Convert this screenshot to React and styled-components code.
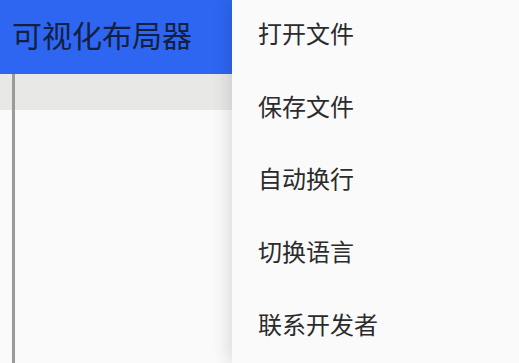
import React from "react";
import styled, { createGlobalStyle } from "styled-components";

const Global = createGlobalStyle`
  html, body { margin: 0; padding: 0; }
  body {
    width: 519px;
    height: 363px;
    overflow: hidden;
    background: #fafafa;
    font-family: "Noto Sans CJK SC", "Noto Sans", sans-serif;
  }
`;

const Page = styled.div`
  position: relative;
  width: 519px;
  height: 363px;
  display: flex;
  flex-direction: column;
  background: #fafafa;
  overflow: hidden;
`;

const Header = styled.header`
  height: 74px;
  background: #2e66f2;
  display: flex;
  align-items: center;
  padding-left: 12px;
  flex-shrink: 0;
`;

const Title = styled.h1`
  margin: 0;
  font-size: 30px;
  font-weight: 400;
  color: #14203f;
  line-height: 1;
  transform: translateY(-3px);
`;

const Body = styled.div`
  flex: 1;
  display: flex;
  flex-direction: column;
  position: relative;
`;

const Strip = styled.div`
  height: 36px;
  background: #e8e8e7;
`;

const Canvas = styled.div`
  flex: 1;
  background: #fafafa;
`;

const Divider = styled.div`
  position: absolute;
  left: 12px;
  top: 0;
  bottom: 0;
  width: 3px;
  background: #9a9a9a;
`;

const Menu = styled.nav`
  position: absolute;
  top: 0;
  left: 232px;
  right: 0;
  bottom: 0;
  background: #fafafa;
  box-shadow: -4px 0 16px rgba(0, 0, 0, 0.12);
  display: flex;
  flex-direction: column;
`;

const Item = styled.div`
  height: 73.5px;
  display: flex;
  align-items: center;
  padding-left: 26px;
  font-size: 24px;
  color: #2b2b2b;
  line-height: 1;
  transform: translateY(-3px);
`;

const items = ["打开文件", "保存文件", "自动换行", "切换语言", "联系开发者"];

export default function App() {
  return (
    <>
      <Global />
      <Page>
        <Header>
          <Title>可视化布局器</Title>
        </Header>
        <Body>
          <Strip />
          <Canvas />
          <Divider />
        </Body>
        <Menu>
          {items.map((t) => (
            <Item key={t}>{t}</Item>
          ))}
        </Menu>
      </Page>
    </>
  );
}
